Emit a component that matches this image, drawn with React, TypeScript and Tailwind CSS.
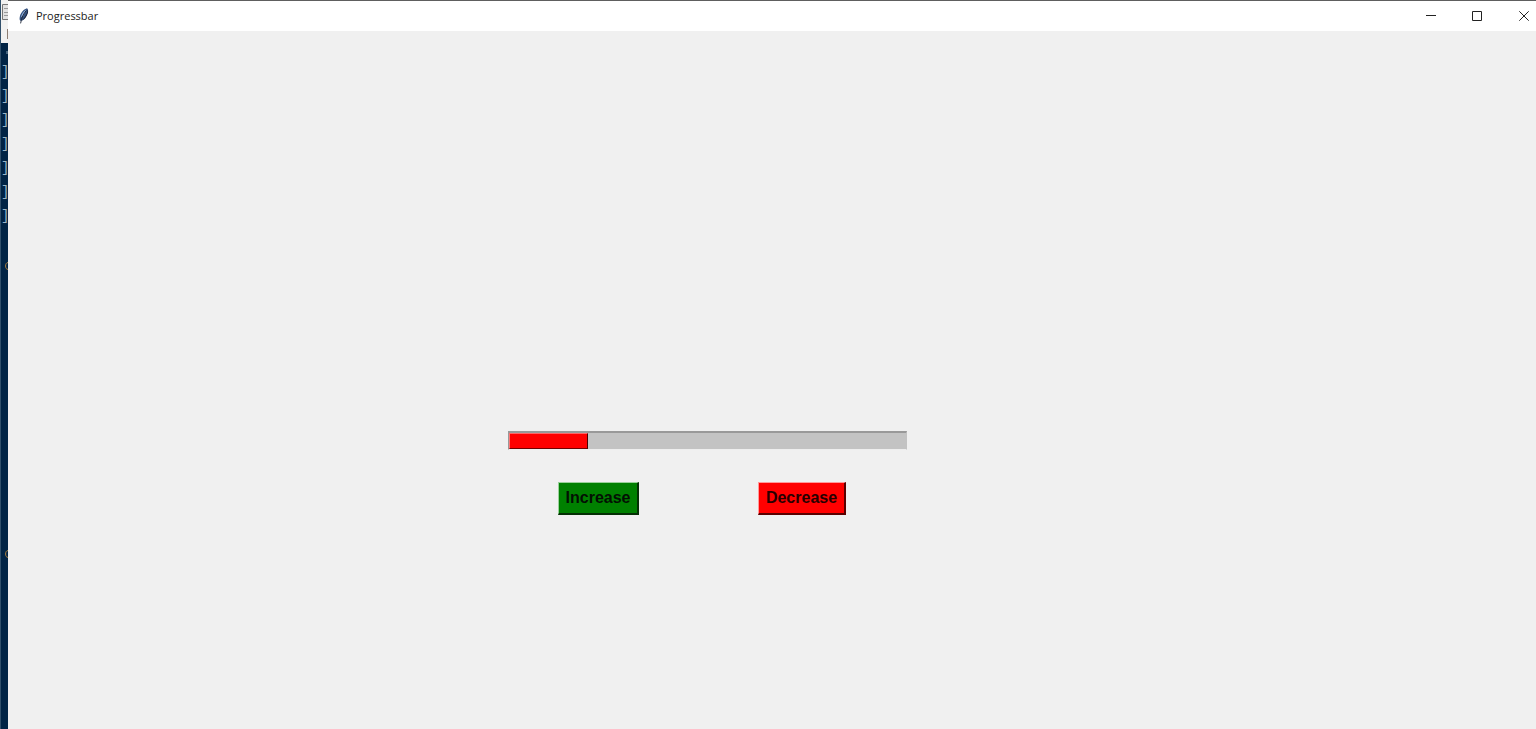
import { useState } from "react";

const promptRows = [1, 2, 3, 4, 5, 6, 7];

function FeatherIcon() {
  return (
    <svg viewBox="0 0 12 16" className="h-4 w-3 shrink-0" aria-hidden="true">
      <path d="M9 0.3C6.2 1 2.8 4.5 1.9 8.2C1.4 10.2 1.5 11.8 2.2 12.8L4.4 12.4C7.4 10.5 9.8 6 10 2.8C10 1.6 9.7 0.8 9 0.3Z" fill="#34517f" />
      <path d="M8.4 1.4C5.6 3 3.4 6 2.7 9.6L5.6 7.2Z" fill="#8fb0dc" />
      <path d="M9.5 1C9.8 3.8 7.5 9 4.2 12.4C7.8 10.6 10.4 5.6 10.1 2.4Z" fill="#172139" />
      <path d="M8.2 2.6C5.8 5.4 3.6 9.2 2.6 15.4" fill="none" stroke="#1b2233" strokeWidth="0.9" />
    </svg>
  );
}

function CommandMark() {
  return (
    <svg viewBox="0 0 3 8" className="h-2 w-[3px]">
      <path d="M3 0.6C1.3 0.6 0.6 2.2 0.6 4C0.6 5.8 1.3 7.4 3 7.4" fill="none" stroke="currentColor" />
    </svg>
  );
}

function BackgroundEditor() {
  return (
    <div className="flex w-2 shrink-0 flex-col overflow-hidden border-l border-[#31506b] bg-[#012445]" aria-hidden="true">
      <div className="-ml-px h-[43px] shrink-0 bg-[#f1f1f0] pt-1">
        <svg viewBox="0 0 8 36" className="h-9 w-2">
          <path d="M8 0.5H2.5V15.5H8" fill="#e2e2e2" stroke="#777777" />
          <path d="M4 4.5H8M4 8.5H8M4 11.5H8" stroke="#999999" />
          <path d="M7.5 25V35" stroke="#8c7d72" />
        </svg>
      </div>
      <div className="flex h-[17px] shrink-0 items-start justify-end text-[#8ba3b5]">
        <svg viewBox="0 0 2 12" className="h-3 w-0.5">
          <path d="M1 8V11" stroke="currentColor" />
        </svg>
      </div>
      <div className="font-['Liberation_Mono',monospace] text-sm leading-6 text-[#9db5c6]">
        {promptRows.map((row) => (
          <div key={row} className="h-6">]</div>
        ))}
      </div>
      <div className="mt-[26px] flex h-6 shrink-0 items-center justify-end text-[#b0823f]">
        <CommandMark />
      </div>
      <div className="mt-[264px] flex h-6 shrink-0 items-center justify-end text-[#b0823f]">
        <CommandMark />
      </div>
    </div>
  );
}

function TitleBar() {
  return (
    <header className="flex h-[31px] shrink-0 items-center justify-between border-t border-[#5e5e5e] bg-white pl-2.5">
      <div className="flex items-center gap-1.5">
        <FeatherIcon />
        <h1 className="font-['Open_Sans','Noto_Sans',sans-serif] text-[11px] text-[#222222]">Progressbar</h1>
      </div>
      <div className="flex h-full text-[#222222]">
        <button type="button" aria-label="Minimize" className="flex w-[46px] items-center justify-center">
          <svg viewBox="0 0 10 10" className="size-2.5">
            <path d="M0 4.5H10" stroke="currentColor" />
          </svg>
        </button>
        <button type="button" aria-label="Maximize" className="flex w-[46px] items-center justify-center">
          <svg viewBox="0 0 10 10" className="size-2.5">
            <path d="M0.5 0.5H9.5V9.5H0.5Z" fill="none" stroke="currentColor" />
          </svg>
        </button>
        <button type="button" aria-label="Close" className="flex w-9 items-center justify-end pr-[7px]">
          <svg viewBox="0 0 10 10" className="size-2.5">
            <path d="M0.3 0.3L9.7 9.7M9.7 0.3L0.3 9.7" stroke="currentColor" />
          </svg>
        </button>
      </div>
    </header>
  );
}

export default function App() {
  const [value, setValue] = useState(20);
  return (
    <div className="flex h-screen overflow-hidden bg-[#012445]">
      <BackgroundEditor />
      <div className="flex min-w-0 flex-1 flex-col bg-[#f0f0f0]">
        <TitleBar />
        <main className="flex flex-1 flex-col items-start pt-[400px] pl-[500px]">
          <div
            role="progressbar"
            aria-label="Progress"
            aria-valuenow={value}
            aria-valuemin={0}
            aria-valuemax={100}
            className="h-[19px] w-[399px] border border-t-2 border-t-[#999999] border-r-[#c3c3c3] border-b-[#eeeeee] border-l-[#999999] bg-[#c3c3c3]"
          >
            <div
              className="h-full border border-t-[#ff6666] border-r-[#4a0000] border-b-[#700000] border-l-[#ff7777] bg-[#ff0000]"
              style={{ width: `${value}%` }}
            />
          </div>
          <div className="mt-8 flex gap-[119px] pl-[50px] font-['Liberation_Sans',Arial,sans-serif] text-base font-bold">
            <button
              type="button"
              onClick={() => setValue((v) => Math.min(100, v + 10))}
              className="h-[33px] w-[81px] border border-r-2 border-b-2 border-t-[#9ad09a] border-r-[#053005] border-b-[#053005] border-l-[#9ad09a] bg-[#008000] text-[#031003]"
            >
              Increase
            </button>
            <button
              type="button"
              onClick={() => setValue((v) => Math.max(0, v - 10))}
              className="h-[33px] w-[88px] border border-r-2 border-b-2 border-t-[#ff9a9a] border-r-[#5a0000] border-b-[#5a0000] border-l-[#ff9a9a] bg-[#ff0000] text-[#260000]"
            >
              Decrease
            </button>
          </div>
        </main>
      </div>
    </div>
  );
}
